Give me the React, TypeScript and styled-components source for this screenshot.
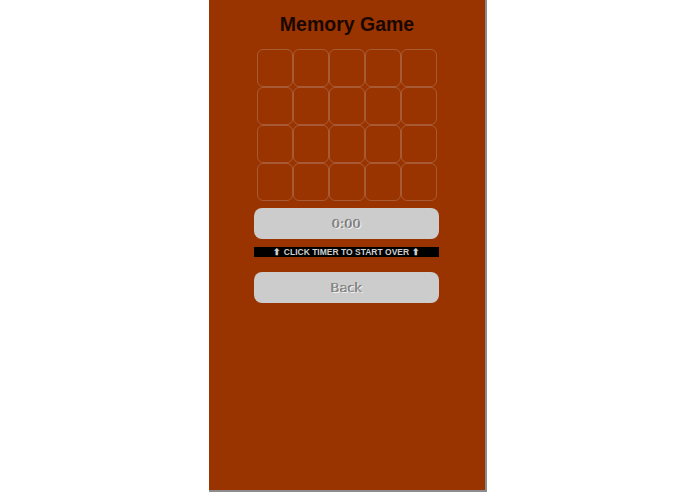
import styled, { createGlobalStyle } from "styled-components"

const GlobalStyle = createGlobalStyle`
    html, body {
        margin: 0;
        padding: 0;
        background: #ffffff;
    }
    body {
        font-family: "Liberation Sans", Arial, sans-serif;
    }
`

const Panel = styled.div`
    width: 278px;
    height: 492px;
    margin: 0 auto;
    padding-top: 12px;
    box-sizing: border-box;
    background: #993300;
    border-right: 2px solid #8c8c8c;
    border-bottom: 2px solid #8c8c8c;
    display: flex;
    flex-direction: column;
    align-items: center;
`

const Title = styled.h1`
    margin: 0 0 0 1px;
    font-size: 19.5px;
    line-height: 24px;
    font-weight: bold;
    color: #1a0800;
`

const Board = styled.div`
    margin-top: 13px;
    display: grid;
    grid-template-columns: repeat(5, 36px);
    grid-auto-rows: 38px;
`

const Cell = styled.div`
    box-sizing: border-box;
    border: 1px solid rgba(190, 150, 130, 0.4);
    border-radius: 6px;
`

const Pill = styled.button<{ $gap: number }>`
    margin-top: ${p => p.$gap}px;
    width: 185px;
    height: 31px;
    border: none;
    border-radius: 8px;
    background: #cccccc;
    font-family: "DejaVu Sans", Verdana, sans-serif;
    font-size: 13px;
    color: #8e8e8e;
    text-shadow: 1px 1px 0 #f2f2f2, -0.5px -0.5px 0 #555555;
    cursor: pointer;
    padding: 0;
`

const Hint = styled.div`
    margin-top: 8px;
    width: 185px;
    height: 10px;
    background: #000000;
    color: #cfcfcf;
    font-size: 8.5px;
    font-weight: bold;
    line-height: 10px;
    text-align: center;
    font-family: "Liberation Sans", Arial, sans-serif;
`

export default function App() {
    const cells = Array.from({ length: 20 }, (_, i) => i)
    return (
        <>
            <GlobalStyle />
            <Panel>
                <Title>Memory Game</Title>
                <Board>
                    {cells.map(i => <Cell key={i} />)}
                </Board>
                <Pill $gap={7}>0:00</Pill>
                <Hint>⬆ CLICK TIMER TO START OVER ⬆</Hint>
                <Pill $gap={15}>Back</Pill>
            </Panel>
        </>
    )
}
